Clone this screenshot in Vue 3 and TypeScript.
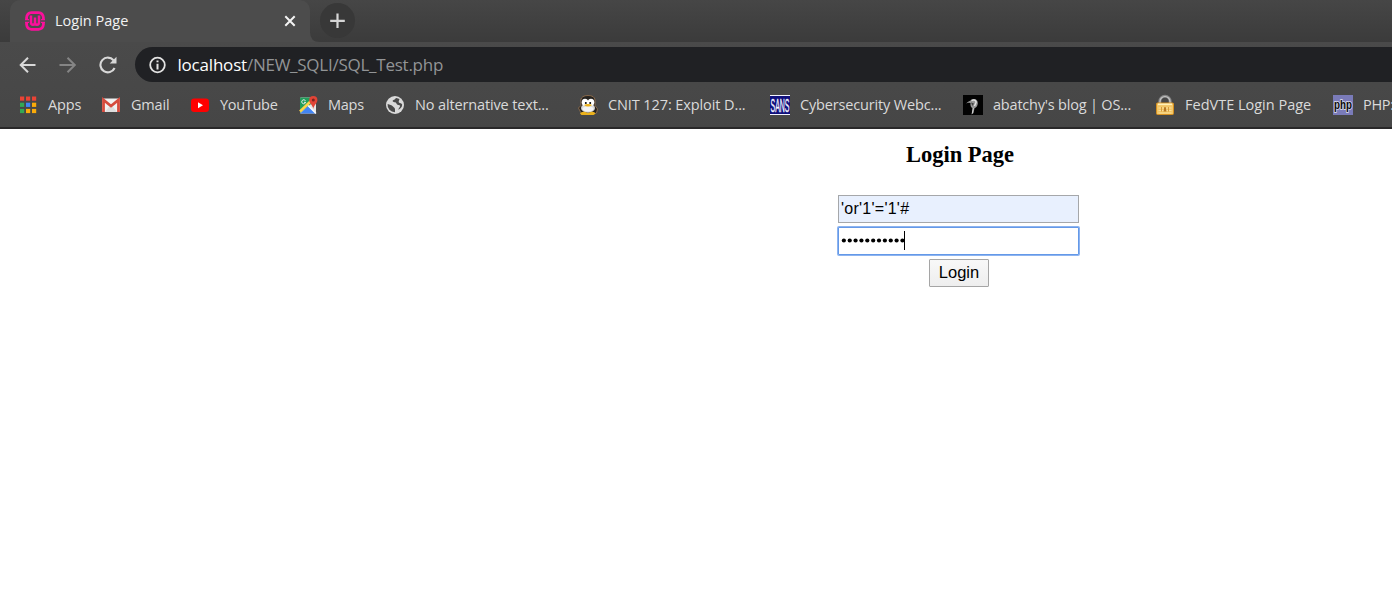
<script setup lang="ts">
import { ref } from 'vue'

interface Bookmark {
  icon: string
  label: string
  width: number
  spacing: number
}

const bookmarks: Bookmark[] = [
  { icon: 'apps', label: 'Apps', width: 83, spacing: -0.1 },
  { icon: 'gmail', label: 'Gmail', width: 89, spacing: -0.2 },
  { icon: 'youtube', label: 'YouTube', width: 108, spacing: -0.3 },
  { icon: 'maps', label: 'Maps', width: 87, spacing: -0.25 },
  { icon: 'globe', label: 'No alternative text...', width: 193, spacing: -0.14 },
  { icon: 'tux', label: 'CNIT 127: Exploit D...', width: 192, spacing: -0.1 },
  { icon: 'sans', label: 'Cybersecurity Webc...', width: 193, spacing: -0.16 },
  { icon: 'raven', label: "abatchy's blog | OS...", width: 192, spacing: -0.2 },
  { icon: 'lock', label: 'FedVTE Login Page', width: 178, spacing: 0 },
  { icon: 'php', label: 'PHP:', width: 60, spacing: -0.3 },
]

const appColors = ['#ea4335', '#ea4335', '#ea4335', '#34a853', '#4285f4', '#fbab09', '#34a853', '#fbab09', '#fbab09']
const username = ref("'or'1'='1'#")
const maskLength = 11
</script>

<template>
  <div class="window">
    <header class="chrome">
      <div class="tabstrip">
        <div class="tab">
          <svg class="favicon" width="20" height="20" viewBox="0 0 20 20" fill="none" stroke="#fb0f9c">
            <path d="M1.600 8.500V6.500Q2 2 6.500 1.600H13.500Q18 2 18.400 6.500V8.500M1.600 11.500V13.500Q2 18 6.500 18.400H13.500Q18 18 18.400 13.500V11.500" stroke-width="2.800" />
            <path d="M0 8.700H4M16 8.700H20M0 11.300H4M16 11.300H20" stroke-width="1.200" />
            <path d="M6 4.500V11.500Q6 13.700 8 13.700Q10 13.700 10 11.500V6.500M10 11.500Q10 13.700 12 13.700Q14 13.700 14 11.500V4.500" stroke-width="2.500" />
          </svg>
          <span class="tab-title">Login Page</span>
          <svg class="close" width="12" height="12" viewBox="0 0 12 12"><path d="M1.300 1.300 10.700 10.700M10.700 1.300 1.300 10.700" stroke="#f4f4f4" stroke-width="2" /></svg>
          <svg class="flare" width="10" height="10" viewBox="0 0 10 10"><path d="M0 0Q0 10 10 10H0Z" fill="#4c4c4c" /></svg>
        </div>
        <div class="new-tab">
          <svg width="16" height="16" viewBox="0 0 16 16"><path d="M7.500 .5V15M.2 7.800H14.800" stroke="#d6d6d6" stroke-width="2.200" /></svg>
        </div>
      </div>

      <div class="toolbar">
        <svg class="nav" width="18" height="18" viewBox="0 0 18 18" fill="none" stroke="#d8d8d8" stroke-width="2"><path d="M16.500 9H2M9 1.700 1.700 9 9 16.300" /></svg>
        <svg class="nav" width="18" height="18" viewBox="0 0 18 18" fill="none" stroke="#858585" stroke-width="2"><path d="M.5 9H15.500M8.500 1.700 15.800 9 8.500 16.300" /></svg>
        <svg class="nav" width="18" height="18" viewBox="0 0 18 18"><path d="M15.600 12A7.400 7.400 0 1 1 14.500 4.200" fill="none" stroke="#d8d8d8" stroke-width="2.100" /><path d="M17.500.8V7.600H10.700Z" fill="#d8d8d8" /></svg>
        <div class="address">
          <svg width="18" height="18" viewBox="0 0 18 18"><circle cx="8.500" cy="9" r="7.300" fill="none" stroke="#e3e3e3" stroke-width="1.800" /><path d="M8.500 4.500V6.300M8.500 7.700V13.500" stroke="#e3e3e3" stroke-width="2" /></svg>
          <span class="url"><span class="host">localhost</span><span class="path">/NEW_SQLI/SQL_Test.php</span></span>
        </div>
      </div>

      <nav class="bookmarks">
        <a v-for="b in bookmarks" :key="b.label" class="bookmark" :style="{ width: b.width + 'px' }">
          <svg class="icon" width="20" height="20" viewBox="0 0 20 20">
            <g v-if="b.icon === 'apps'">
              <rect v-for="(c, i) in appColors" :key="i" :x="2 + (i % 3) * 6" :y="1.500 + Math.floor(i / 3) * 6.200" width="4.200" height="4.200" :fill="c" />
            </g>
            <g v-else-if="b.icon === 'gmail'">
              <rect x="1" y="3.500" width="18" height="13.500" rx="1.500" fill="#f1f1f1" />
              <path d="M4 17 8.500 11 10 12.200 11.500 11 16 17" fill="#ddd" />
              <path d="M2.500 17V5L10 11 17.500 5V17" fill="none" stroke="#d54b3d" stroke-width="2.800" />
            </g>
            <g v-else-if="b.icon === 'youtube'">
              <rect x="1" y="3.500" width="18" height="13.500" rx="3.200" fill="#f00" />
              <path d="M8 7.300V13.200L13 10.250Z" fill="#fff" />
            </g>
            <g v-else-if="b.icon === 'maps'">
              <rect x="2" y="2.500" width="16" height="16" rx="1" fill="#e5e5e5" />
              <path d="M2 3.500Q2 2.500 3 2.500H13V9L2 18Z" fill="#219d5a" />
              <path d="M2 18.500 10 11 17.500 18.500Z" fill="#4285f4" />
              <path d="M2 16.500 13 6" stroke="#fdd349" stroke-width="2.600" />
              <path d="M10 10.500 18 18.500" stroke="#f8f8f8" stroke-width="1.500" />
              <path d="M7.500 5.800A2 2 0 1 0 7.700 7.300H6" fill="none" stroke="#f0f0f0" />
              <path d="M15.300 14C14.800 10 11.200 8.400 11.200 5A4.100 4.100 0 0 1 19.400 5C19.400 8.400 15.800 10 15.300 14Z" fill="#e04436" />
              <circle cx="15.300" cy="5" r="1.500" fill="#7b231f" />
            </g>
            <g v-else-if="b.icon === 'globe'">
              <circle cx="10" cy="10" r="9" fill="#dadada" />
              <path d="M2.600 9C5 10 6.500 9.500 8 11.500C9 13 10 12.500 10 14.500V17.200A7.300 7.300 0 0 1 2.600 9ZM11.500 2.900C10 3 10.500 4.500 8.500 5C7 5.300 7.500 7 9.300 7.200C12 7.200 11 9.500 13.500 10C15.500 10 15.500 11.500 14 13L13.200 14.800Q17.200 13 17.200 9.500Q16.500 8.400 15 8Q13 7.500 14 5.500L14.500 4.100Z" fill="#4a4a4a" />
            </g>
            <g v-else-if="b.icon === 'tux'">
              <path d="M.5 13 3 10.500 2.800 5Q3.500 .5 10 .5Q16.500 .5 17 5L17 10.500 19.500 14 18.500 18 16 19H3.500L1.500 15Z" fill="#25221f" stroke="#9b7550" stroke-width=".8" />
              <ellipse cx="10" cy="13" rx="7" ry="4.700" fill="#d9d9d9" />
              <ellipse cx="7" cy="7.300" rx="3.300" ry="3.500" fill="#fff" /><ellipse cx="13" cy="7.300" rx="3.300" ry="3.500" fill="#fff" />
              <ellipse cx="10" cy="13.800" rx="5.500" ry="2.600" fill="#f4f4f4" />
              <circle cx="7.800" cy="8" r="1" /><circle cx="12.200" cy="8" r="1" />
              <path d="M5.800 10Q10 7.800 14.200 10Q10 13 5.800 10Z" fill="#edaf13" />
              <path d="M2 18.500Q3.500 16 7.500 17L10 18 12.500 17Q16.500 16 17.500 18.500L15.500 20H3.500Z" fill="#eab11c" />
            </g>
            <g v-else-if="b.icon === 'sans'">
              <rect width="20" height="20" fill="#10107d" /><path d="M0 .5H20M0 19.500H20" stroke="#f4f4ff" />
              <text x=".5" y="16.700" class="sans-logo" textLength="19" lengthAdjust="spacingAndGlyphs">SANS</text>
            </g>
            <g v-else-if="b.icon === 'raven'">
              <rect width="20" height="20" fill="#030303" />
              <path d="M3 8.500Q5 6.500 7.500 5.500Q9 3.500 12 4Q15 5 14.800 8.500Q14.500 12 11.500 13.300L10.500 18 8.500 19.500 9.700 13.500Q7 12 7.500 8Q5 7.500 3 8.500Z" fill="#969696" />
              <path d="M8 7.500 11 8.500 9.500 11Z" fill="#444" /><path d="M8.500 5.500Q12 4.200 13.200 7L11.500 11" fill="none" stroke="#e2e2e2" stroke-width="1.400" /><path d="M10.300 13 9.300 18.500" stroke="#d2d2d2" />
            </g>
            <g v-else-if="b.icon === 'lock'">
              <path d="M4.800 9V6.500A5.200 5.200 0 0 1 15.200 6.500V9" fill="none" stroke="#858585" stroke-width="3" />
              <path d="M5 8V6.500A5 5 0 0 1 15 6.500V8" fill="none" stroke="#c4c4c4" stroke-width="1.200" />
              <rect x="1.500" y="8" width="17" height="11.500" rx="1" fill="#f2c565" stroke="#d58f20" />
              <path d="M3 9.300H17" stroke="#fff0b8" stroke-width="1.600" /><path d="M3.500 13H16.500M3.500 15.500H16.500M3.500 18H16.500" stroke="#fbe09a" />
              <path d="M6.500 12V16.500M13.500 12V16.500" stroke="#d79b3a" /><path d="M9 12.200H11V14L11.500 16.500H8.500L9 14Z" fill="#b67824" />
            </g>
            <g v-else>
              <rect width="20" height="20" fill="#7a7bb9" />
              <text x="1" y="13.500" class="php-logo" textLength="18" lengthAdjust="spacingAndGlyphs">php</text>
            </g>
          </svg>
          <span class="label" :style="{ letterSpacing: b.spacing + 'px' }">{{ b.label }}</span>
        </a>
      </nav>
    </header>

    <main class="page">
      <h2>Login Page</h2>
      <form class="login" @submit.prevent>
        <input v-model="username" class="field username" type="text" spellcheck="false" />
        <div class="field focused">
          <svg class="mask" width="63" height="18" viewBox="0 0 63 18">
            <circle v-for="n in maskLength" :key="n" :cx="n * 5.860 - 3" cy="8.500" r="2.100" />
          </svg>
          <i class="caret"></i>
        </div>
        <button type="submit">Login</button>
      </form>
    </main>
  </div>
</template>

<style>
body { margin: 0; background: #fff; overflow: hidden; }
</style>

<style scoped>
.window { width: 100%; height: 600px; overflow: hidden; background: #fff; }
.chrome { height: 129px; box-sizing: border-box; border-bottom: 2px solid #292829; background: linear-gradient(#4c4c4c, #464646); font-family: "Open Sans", "Noto Sans", sans-serif; overflow: hidden; }
.tabstrip { height: 42px; display: flex; padding-left: 10px; background: linear-gradient(#464646, #3b3b3b); }
.tab { position: relative; box-sizing: border-box; width: 300px; height: 42px; display: flex; align-items: center; padding: 0 14px 0 15px; border-radius: 10px 10px 0 0; background: #4c4c4c; }
.tab-title { margin-left: 10px; flex: 1; font-size: 14.5px; line-height: 20px; color: #f2f2f2; }
.flare { position: absolute; left: 300px; bottom: 0; }
.new-tab { margin: 3px 0 0 10px; width: 35px; height: 35px; border-radius: 50%; background: #383838; display: flex; align-items: center; justify-content: center; }
.toolbar { height: 45px; display: flex; align-items: center; padding-left: 19px; }
.nav { margin-right: 22px; flex: none; }
.address { flex: 1; margin-left: -4px; height: 35px; display: flex; align-items: center; box-sizing: border-box; padding-left: 14px; border-radius: 18px 0 0 18px; background: #202124; }
.url { margin-left: 10.5px; font-size: 17px; line-height: 24px; white-space: nowrap; }
.host { color: #fff; letter-spacing: -0.2px; }
.path { color: #929496; letter-spacing: -0.25px; }
.bookmarks { display: flex; height: 36px; padding-left: 18px; align-items: center; }
.bookmark { flex: none; display: flex; align-items: center; gap: 10px; }
.icon { flex: none; overflow: visible; }
.label { font-size: 14.5px; line-height: 20px; color: #dadada; white-space: nowrap; }
.sans-logo { font: 18.5px "Liberation Sans", sans-serif; fill: #f5f5ff; stroke: #f5f5ff; stroke-width: 0.4px; }
.php-logo { font: bold 13px "Liberation Sans", sans-serif; fill: #080808; stroke: #e5e5f1; stroke-width: 1.5px; paint-order: stroke; }
.page { width: 246px; margin-left: 837px; padding-top: 12px; }
h2 { margin: 0; text-align: center; font: bold 22.5px/27px "Liberation Serif", serif; color: #000; }
.login { display: flex; flex-direction: column; align-items: flex-start; margin-top: 27px; padding-left: 1px; }
.field { box-sizing: border-box; width: 241px; height: 28px; padding: 0 2px; border: 1px solid #a5a7aa; border-radius: 0; background: #e8f0fe; color: #000; font: 16px "Liberation Sans", sans-serif; outline: none; }
.username { letter-spacing: 0.25px; }
.focused { display: flex; align-items: center; margin-top: 4px; background: #fff; border-color: #6499e8; box-shadow: 0 0 0 1px #8db4f0; border-radius: 1px; }
.mask { flex: none; overflow: visible; }
.caret { width: 1px; height: 19px; background: #000; margin-bottom: 1px; }
button { box-sizing: border-box; width: 60px; height: 28px; margin: 4px 0 0 91px; padding: 0 0 2px; border: 1px solid #a5a5a5; border-radius: 1px; background: linear-gradient(#f8f8f8, #eee); color: #000; font: 16.5px "Liberation Sans", sans-serif; }
</style>
